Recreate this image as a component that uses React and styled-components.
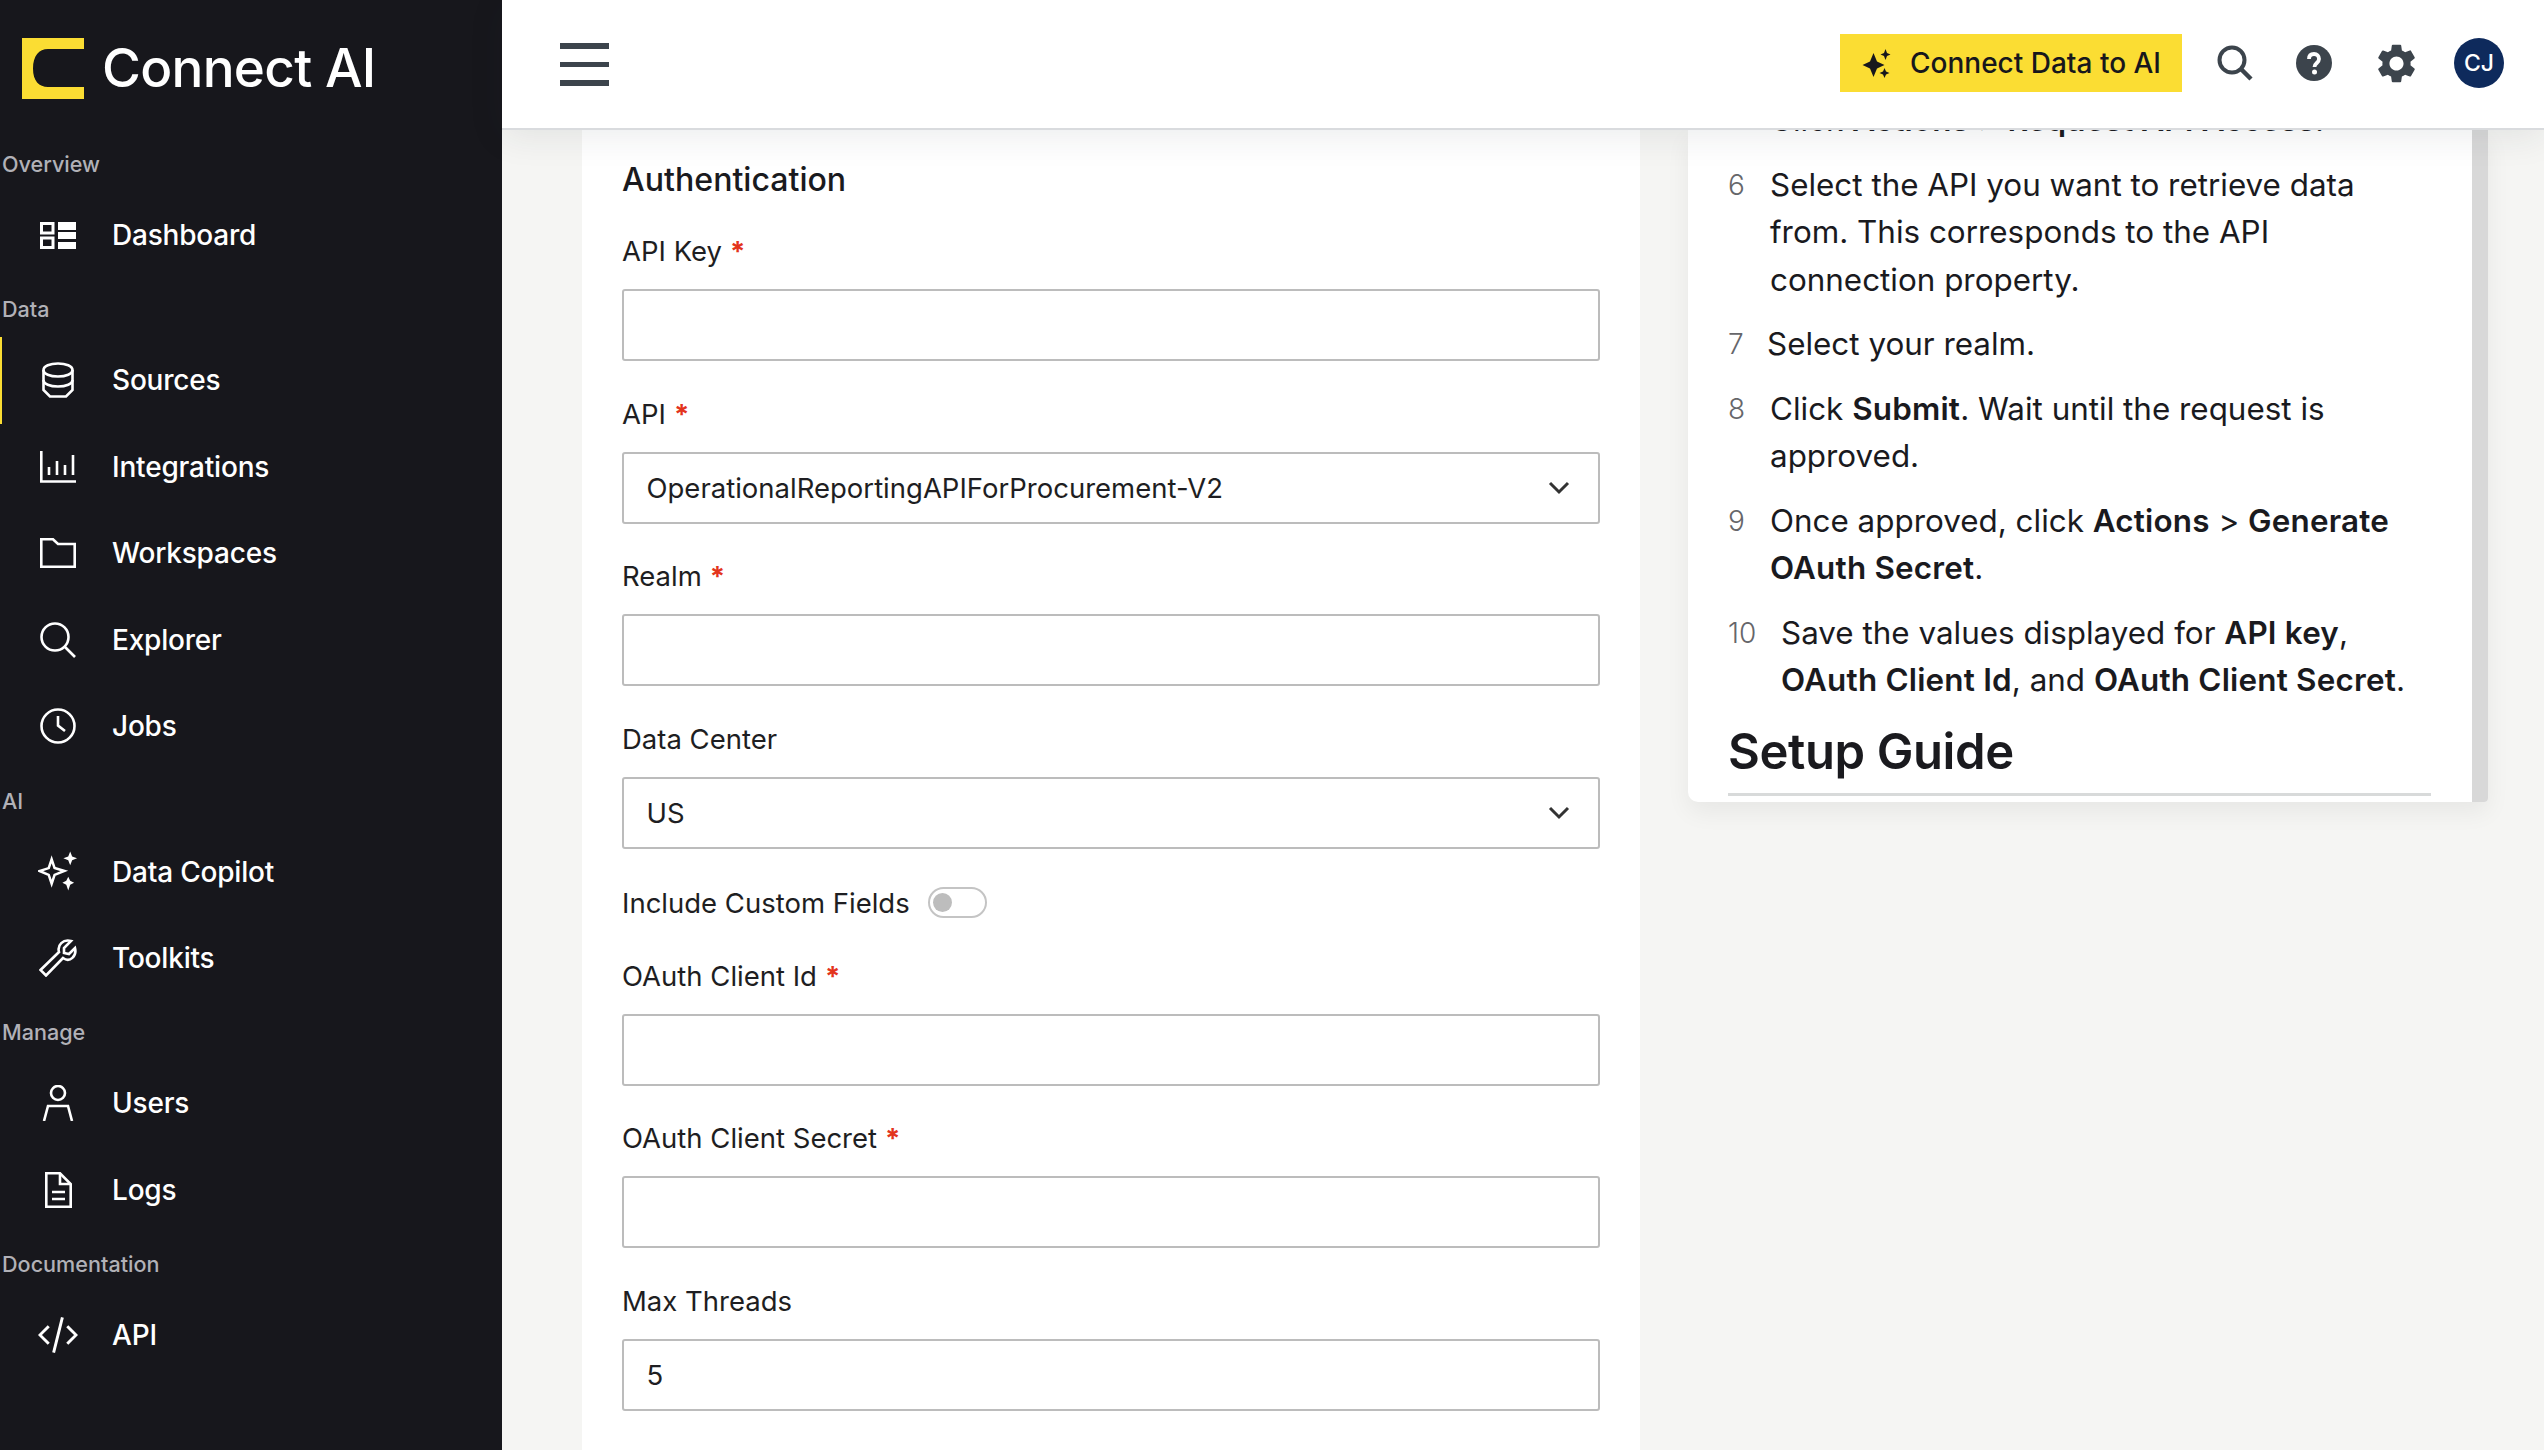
import React from "react";
import styled, { createGlobalStyle } from "styled-components";

const Global = createGlobalStyle`
  html, body { margin: 0; padding: 0; height: 100%; }
  body { font-family: Inter, "Noto Sans", "Liberation Sans", sans-serif; background: #f5f5f3; color: #1a1a1e; }
  * { box-sizing: border-box; }
`;

const Shell = styled.div`
  display: flex;
  width: 100vw;
  height: 100vh;
  overflow: hidden;
`;

const Sidebar = styled.aside`
  flex: 0 0 502px;
  background: #17171c;
  color: #fff;
  display: flex;
  flex-direction: column;
`;

const Brand = styled.div`
  height: 135px;
  padding: 38px 0 0 22px;
  display: flex;
  align-items: flex-start;
  gap: 18px;
`;

const BrandText = styled.span`
  font-size: 53px;
  line-height: 61px;
  font-weight: 500;
  letter-spacing: -0.7px;
`;

const SectionLabel = styled.div`
  height: ${(p) => p.$h || 58.7}px;
  padding: ${(p) => p.$pt || 0}px 0 0 2px;
  display: flex;
  align-items: center;
  font-size: 21.6px;
  font-weight: 500;
  color: #b1b1b7;
`;

const NavItem = styled.div`
  height: 86.5px;
  display: flex;
  align-items: center;
  border-left: 2px solid ${(p) => (p.$active ? "#fbdd33" : "transparent")};
  padding-left: 36px;
  font-size: 28px;
  font-weight: 500;
  letter-spacing: -0.2px;
`;

const NavIcon = styled.span`
  width: 40px;
  height: 40px;
  margin-right: 34px;
  display: flex;
  align-items: center;
  justify-content: center;
  flex: none;
`;

const Column = styled.div`
  flex: 1;
  min-width: 0;
  display: flex;
  flex-direction: column;
`;

const Topbar = styled.header`
  flex: 0 0 130px;
  background: #fff;
  border-bottom: 2px solid #d9dbde;
  box-shadow: 0 6px 34px rgba(30, 40, 60, 0.09);
  position: relative;
  z-index: 2;
  display: flex;
  align-items: center;
  padding: 0 40px 2px 58px;
`;

const Burger = styled.div`
  width: 49px;
  display: flex;
  flex-direction: column;
  gap: 13px;
  margin-top: 3px;
  span { display: block; height: 5.5px; background: #3c444c; }
`;

const TopActions = styled.div`
  margin-left: auto;
  display: flex;
  align-items: center;
`;

const CtaButton = styled.div`
  width: 342px;
  height: 58px;
  background: #fbdd33;
  display: flex;
  align-items: center;
  padding-left: 22px;
  gap: 18px;
  font-size: 28px;
  font-weight: 500;
  color: #17171c;
`;

const TopIcon = styled.span`
  display: flex;
  margin-left: ${(p) => p.$ml}px;
`;

const Avatar = styled.div`
  width: 50px;
  height: 50px;
  margin-left: 34.5px;
  border-radius: 50%;
  background: #0e2a5c;
  color: #fff;
  font-size: 23px;
  font-weight: 500;
  display: flex;
  align-items: center;
  justify-content: center;
`;

const Main = styled.main`
  flex: 1;
  min-height: 0;
  overflow: hidden;
  background: #f5f5f3;
  display: flex;
  align-items: flex-start;
  padding-left: 80px;
  gap: 48px;
`;

const FormCard = styled.section`
  flex: 0 0 1058px;
  height: 100%;
  background: #fff;
  padding: 28px 40px 0 40px;
`;

const FormHeading = styled.h2`
  margin: 0 0 26px;
  font-size: 32.1px;
  line-height: 44px;
  font-weight: 500;
`;

const Field = styled.div`
  margin-bottom: 29.7px;
`;

const Label = styled.div`
  font-size: 27.5px;
  line-height: 46px;
  margin-bottom: 15px;
  color: #1e1e22;
`;

const Star = styled.span`
  color: #e3341c;
  font-weight: 700;
  margin-left: 8px;
`;

const InputBox = styled.div`
  height: 72px;
  border: 2px solid #bcbcbc;
  border-radius: 3px;
  background: #fff;
  padding: 0 28px 0 22.5px;
  display: flex;
  align-items: center;
  justify-content: space-between;
  font-size: 27.5px;
  color: #1e1e22;
`;

const ToggleRow = styled.div`
  height: 48px;
  margin-bottom: 26px;
  display: flex;
  align-items: center;
  gap: 18.5px;
  font-size: 27.5px;
  color: #1e1e22;
`;

const Toggle = styled.span`
  width: 59px;
  height: 31px;
  border: 2px solid #c4c4c4;
  border-radius: 16px;
  display: flex;
  align-items: center;
  padding-left: 3px;
  &::before {
    content: "";
    width: 19px;
    height: 19px;
    border-radius: 50%;
    background: #bdbdbd;
  }
`;

const GuideCard = styled.section`
  flex: 0 0 800px;
  height: 672px;
  display: flex;
  background: #fff;
  border-radius: 0 0 4px 10px;
  box-shadow: 0 10px 24px rgba(0, 0, 0, 0.06);
  overflow: hidden;
`;

const GuideBody = styled.div`
  flex: 1;
  min-width: 0;
  padding: 0 41px 0 40px;
  margin-top: -33px;
`;

const ScrollTrack = styled.div`
  flex: 0 0 16px;
  background: #d8d8d8;
`;

const Step = styled.div`
  display: flex;
  margin-bottom: ${(p) => p.$mb ?? 16.4}px;
  font-size: 31.4px;
  line-height: 47.8px;
  color: #1a1a1e;
  b { font-weight: 600; letter-spacing: 0.2px; }
`;

const StepNum = styled.span`
  flex: 0 0 ${(p) => p.$w}px;
  font-size: 28px;
  font-weight: 300;
  color: #66666a;
`;

const GuideTitle = styled.h1`
  margin: 0;
  font-size: 49px;
  line-height: 60px;
  font-weight: 600;
  letter-spacing: -0.4px;
  padding-bottom: 11.5px;
  border-bottom: 3px solid #d8dada;
`;

const Logo = () => (
  <svg width="62" height="61" viewBox="0 0 62 61">
    <path fill="#fbdd33" fillRule="evenodd" d="M0 0H62V11H26C17 11 11 18 11 30.500S17 49 26 49H62V61H0Z" />
  </svg>
);

const s = { fill: "none", stroke: "#fff", strokeWidth: 2.6 };

const icons = {
  dashboard: (
    <svg width="36" height="27" viewBox="0 0 36 27">
      <rect x="1.500" y="1.500" width="11.500" height="9.500" {...s} strokeWidth="3" />
      <rect x="1.500" y="16" width="11.500" height="9.500" {...s} strokeWidth="3" />
      <path fill="#fff" d="M18 0H36V8H18ZM18 10H36V17H18ZM18 20H36V27H18Z" />
    </svg>
  ),
  db: (
    <svg width="32" height="36" viewBox="0 0 32 36">
      <path {...s} d="M1.500 8C1.500 4 8 1.500 16 1.500S30.500 4 30.500 8V28L24 34.500H8L1.500 28Z" />
      <path {...s} d="M1.500 8C1.500 12 8 14.500 16 14.500S30.500 12 30.500 8M1.500 18C1.500 22 8 24.500 16 24.500S30.500 22 30.500 18" />
    </svg>
  ),
  chart: (
    <svg width="36" height="32" viewBox="0 0 36 32">
      <path {...s} d="M1.300 0V30.500H36" />
      <path {...s} d="M9 16V24M17 10V24M25 14V24M33 4V24" />
    </svg>
  ),
  folder: (
    <svg width="36" height="30" viewBox="0 0 36 30">
      <path {...s} d="M1.300 1.300H13L18 6H34.700V28.700H1.300Z" />
    </svg>
  ),
  search: (
    <svg width="36" height="36" viewBox="0 0 36 36">
      <circle cx="15" cy="15" r="13.500" {...s} />
      <path {...s} d="M24.500 24.500L35 35" />
    </svg>
  ),
  clock: (
    <svg width="36" height="36" viewBox="0 0 36 36">
      <circle cx="18" cy="18" r="16.500" {...s} />
      <path {...s} d="M18 8V17.500L25 23" />
    </svg>
  ),
  sparkle: (
    <svg width="41" height="41" viewBox="0 0 41 41">
      <path {...s} d="M14 8L17 17L27 20L17 24L14 33L11 24L1.500 20L11 17Z" />
      <path fill="#fff" d="M33 0L35 5L40 7L35 9L33 14L31 9L26 7L31 5ZM31 26L33 30L37 32L33 34L31 40L29 34L25 32L29 30Z" />
    </svg>
  ),
  wrench: (
    <svg width="38" height="38" viewBox="0 0 38 38">
      <path {...s} d="M1.500 31L20 13C18 6 24 0 32 2L25 9L25 14L30 15L36 9C38 17 31 24 24 19L7 36.500Z" />
    </svg>
  ),
  user: (
    <svg width="32" height="36" viewBox="0 0 32 36">
      <circle cx="16" cy="8" r="7" {...s} />
      <path {...s} d="M2 36L6 21H26L30 36" />
    </svg>
  ),
  file: (
    <svg width="27" height="36" viewBox="0 0 27 36">
      <path {...s} d="M1.300 1.300H15L25.700 12V34.700H1.300Z" />
      <path {...s} d="M15 1.300V12H25.700M7 20H20M7 27H20" />
    </svg>
  ),
  code: (
    <svg width="41" height="36" viewBox="0 0 41 36">
      <path {...s} strokeWidth="3" d="M11 9L2 18L11 27M30 9L39 18L30 27M25 0L16 36" />
    </svg>
  ),
};

const Nav = ({ icon, active, children }) => (
  <NavItem $active={active}>
    <NavIcon>{icons[icon]}</NavIcon>
    {children}
  </NavItem>
);

const Chevron = () => (
  <svg width="22" height="14" viewBox="0 0 22 14">
    <path d="M2 2L11 11L20 2" fill="none" stroke="#333" strokeWidth="3" />
  </svg>
);

const FormField = ({ label, required, value, select }) => (
  <Field>
    <Label>
      {label}
      {required && <Star>*</Star>}
    </Label>
    <InputBox>
      <span>{value}</span>
      {select && <Chevron />}
    </InputBox>
  </Field>
);

export default function App() {
  return (
    <Shell>
      <Global />
      <Sidebar>
        <Brand>
          <Logo />
          <BrandText>Connect AI</BrandText>
        </Brand>
        <SectionLabel $h={57}>Overview</SectionLabel>
        <Nav icon="dashboard">Dashboard</Nav>
        <SectionLabel $pt={3}>Data</SectionLabel>
        <Nav icon="db" active>Sources</Nav>
        <Nav icon="chart">Integrations</Nav>
        <Nav icon="folder">Workspaces</Nav>
        <Nav icon="search">Explorer</Nav>
        <Nav icon="clock">Jobs</Nav>
        <SectionLabel $pt={3}>AI</SectionLabel>
        <Nav icon="sparkle">Data Copilot</Nav>
        <Nav icon="wrench">Toolkits</Nav>
        <SectionLabel $pt={3}>Manage</SectionLabel>
        <Nav icon="user">Users</Nav>
        <Nav icon="file">Logs</Nav>
        <SectionLabel $pt={3}>Documentation</SectionLabel>
        <Nav icon="code">API</Nav>
      </Sidebar>
      <Column>
        <Topbar>
          <Burger><span /><span /><span /></Burger>
          <TopActions>
            <CtaButton>
              <svg width="30" height="29" viewBox="0 0 29 29">
                <path fill="#17171c" d="M11 4L14.500 12.500L22 16L14.500 19.500L11 28L7.500 19.500L0 16L7.500 12.500ZM23 0L24.500 4L28 5.500L24.500 7L23 11L21.500 7L18 5.500L21.500 4ZM22 19L23.500 22.500L27 24L23.500 25.500L22 29L20.500 25.500L17 24L20.500 22.500Z" />
              </svg>
              Connect Data to AI
            </CtaButton>
            <TopIcon $ml={35}>
              <svg width="36" height="36" viewBox="0 0 36 36">
                <circle cx="15" cy="15" r="12.500" fill="none" stroke="#3c444c" strokeWidth="4" />
                <path d="M24 24L34 34" stroke="#3c444c" strokeWidth="4.500" />
              </svg>
            </TopIcon>
            <TopIcon $ml={43}>
              <svg width="36" height="36" viewBox="0 0 36 36">
                <circle cx="18" cy="18" r="18" fill="#3c444c" />
                <path d="M13 14C13 10.500 15 9 18 9S23 11 23 14C23 18 18.500 18 18.500 22" fill="none" stroke="#fff" strokeWidth="3.800" />
                <circle cx="18.500" cy="27" r="2.500" fill="#fff" />
              </svg>
            </TopIcon>
            <TopIcon $ml={40.5}>
              <svg width="47" height="47" viewBox="0 0 24 24">
                <path fill="#3c444c" d="M19.140 12.940c.04-.3.060-.61.060-.94 0-.32-.02-.64-.07-.94l2.030-1.580a.49.49 0 0 0 .12-.61l-1.920-3.320a.488.488 0 0 0-.59-.22l-2.390.96c-.5-.38-1.030-.7-1.620-.94l-.36-2.540a.484.484 0 0 0-.48-.41h-3.840c-.24 0-.43.17-.47.41l-.36 2.540c-.59.24-1.130.57-1.620.94l-2.390-.96c-.22-.08-.47 0-.59.22L2.740 8.870c-.12.21-.08.47.12.61l2.030 1.580c-.05.3-.09.63-.09.94s.02.64.07.94l-2.030 1.580a.49.49 0 0 0-.12.61l1.920 3.320c.12.22.37.29.59.22l2.390-.96c.5.38 1.030.7 1.620.94l.36 2.540c.05.24.24.41.48.41h3.840c.24 0 .44-.17.47-.41l.36-2.540c.59-.24 1.130-.56 1.620-.94l2.390.96c.22.08.47 0 .59-.22l1.920-3.320c.12-.22.07-.47-.12-.61l-2.010-1.580zM12 15.600c-1.980 0-3.600-1.620-3.600-3.600s1.620-3.600 3.600-3.600 3.600 1.620 3.600 3.600-1.620 3.600-3.600 3.600z" />
              </svg>
            </TopIcon>
            <Avatar>CJ</Avatar>
          </TopActions>
        </Topbar>
        <Main>
          <FormCard>
            <FormHeading>Authentication</FormHeading>
            <FormField label="API Key" required />
            <FormField label="API" required select value="OperationalReportingAPIForProcurement-V2" />
            <FormField label="Realm" required />
            <FormField label="Data Center" select value="US" />
            <ToggleRow>Include Custom Fields<Toggle /></ToggleRow>
            <FormField label="OAuth Client Id" required />
            <FormField label="OAuth Client Secret" required />
            <FormField label="Max Threads" value="5" />
          </FormCard>
          <GuideCard>
            <GuideBody>
              <Step $mb={16.800}><StepNum $w={42}>5</StepNum><span>Click <b>Actions</b> &gt; <b>Request API Access</b>.</span></Step>
              <Step><StepNum $w={42}>6</StepNum><span>Select the API you want to retrieve data<br />from. This corresponds to the API<br />connection property.</span></Step>
              <Step><StepNum $w={39}>7</StepNum><span>Select your realm.</span></Step>
              <Step><StepNum $w={42}>8</StepNum><span>Click <b>Submit</b>. Wait until the request is<br />approved.</span></Step>
              <Step><StepNum $w={42}>9</StepNum><span>Once approved, click <b>Actions</b> &gt; <b>Generate<br />OAuth Secret</b>.</span></Step>
              <Step><StepNum $w={53}>10</StepNum><span>Save the values displayed for <b>API key</b>,<br /><b>OAuth Client Id</b>, and <b>OAuth Client Secret</b>.</span></Step>
              <GuideTitle>Setup Guide</GuideTitle>
            </GuideBody>
            <ScrollTrack />
          </GuideCard>
        </Main>
      </Column>
    </Shell>
  );
}
